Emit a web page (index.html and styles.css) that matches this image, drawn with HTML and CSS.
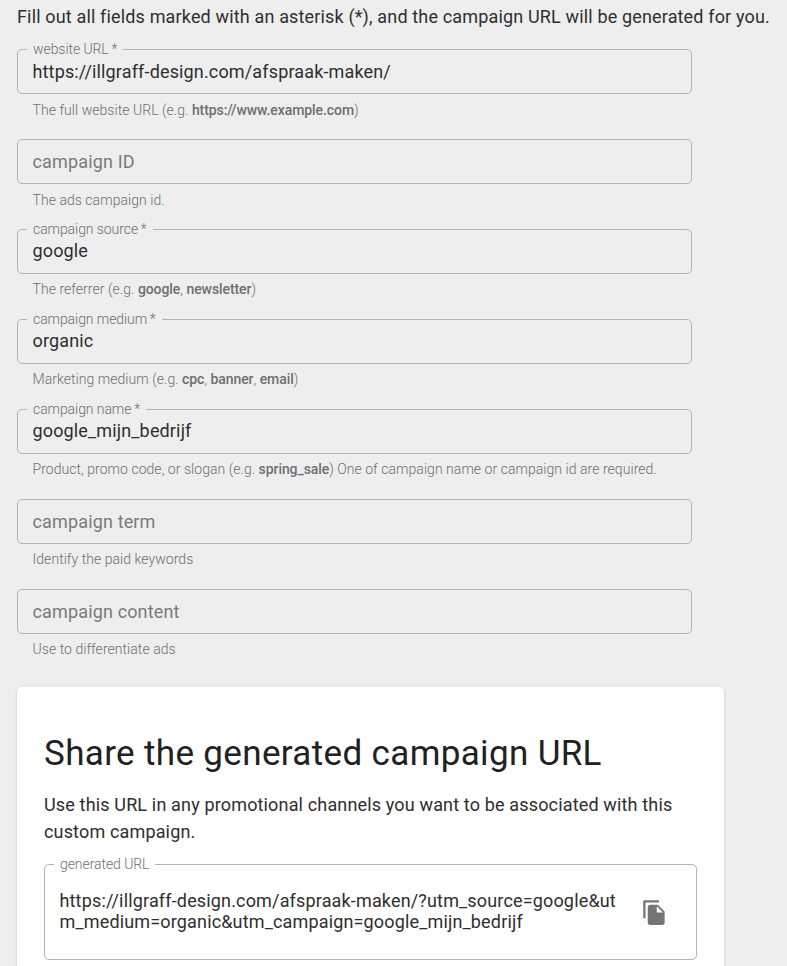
FILE: index.html
```html
<!DOCTYPE html>
<html lang="en">
<head>
    <meta charset="UTF-8">
    <meta name="viewport" content="width=device-width, initial-scale=1.0">
    <title>Campaign URL Builder</title>
    <link rel="stylesheet" href="styles.css">
</head>
<body>
    <p class="intro">Fill out all fields marked with an asterisk (*), and the campaign URL will be generated for you.</p>

    <form class="fields">
        <div class="field">
            <div class="outline">
                <label class="label" for="website">website URL&thinsp;*</label>
                <input class="input" type="text" id="website" value="https://illgraff-design.com/afspraak-maken/">
            </div>
            <p class="helper">The full website URL (e.g. <b>https://www.example.com</b>)</p>
        </div>
        <div class="field">
            <div class="outline">
                <input class="input" type="text" id="campaignId" placeholder="campaign ID">
            </div>
            <p class="helper">The ads campaign id.</p>
        </div>
        <div class="field filled">
            <div class="outline">
                <label class="label" for="source">campaign source&thinsp;*</label>
                <input class="input" type="text" id="source" value="google">
            </div>
            <p class="helper">The referrer (e.g. <b>google</b>, <b>newsletter</b>)</p>
        </div>
        <div class="field filled">
            <div class="outline">
                <label class="label" for="medium">campaign medium&thinsp;*</label>
                <input class="input" type="text" id="medium" value="organic">
            </div>
            <p class="helper">Marketing medium (e.g. <b>cpc</b>, <b>banner</b>, <b>email</b>)</p>
        </div>
        <div class="field filled">
            <div class="outline">
                <label class="label" for="name">campaign name&thinsp;*</label>
                <input class="input" type="text" id="name" value="google_mijn_bedrijf">
            </div>
            <p class="helper">Product, promo code, or slogan (e.g. <b>spring_sale</b>) One of campaign name or campaign id are required.</p>
        </div>
        <div class="field optional">
            <div class="outline">
                <input class="input" type="text" id="term" placeholder="campaign term">
            </div>
            <p class="helper">Identify the paid keywords</p>
        </div>
        <div class="field optional">
            <div class="outline">
                <input class="input" type="text" id="content" placeholder="campaign content">
            </div>
            <p class="helper">Use to differentiate ads</p>
        </div>
    </form>

    <section class="card">
        <h1>Share the generated campaign URL</h1>
        <p class="description">Use this URL in any promotional channels you want to be associated with this custom campaign.</p>
        <div class="outline generated">
            <span class="label">generated URL</span>
            <div class="url">https://illgraff-design.com/afspraak-maken/?utm_source=google&amp;utm_medium=organic&amp;utm_campaign=google_mijn_bedrijf</div>
            <button class="copy" type="button" aria-label="Copy">
                <svg viewBox="0 0 24 24" width="27" height="27">
                    <path fill="currentColor" d="M16 1H3c-.6 0-1 .4-1 1v15h2V3h12V1zm-1 4l6 6v10c0 1.1-.9 2-2 2H8c-1.1 0-2-.9-2-2V7c0-1.1.9-2 2-2h7zm-1 7h5.500L14 6.500V12z"/>
                </svg>
            </button>
        </div>
    </section>
</body>
</html>
```

FILE: styles.css
```css
* {
    box-sizing: border-box;
}
body {
    margin: 0;
    padding: 0 17px;
    height: 966px;
    overflow: hidden;
    background-color: #eeeeee;
    color: #2e2e2e;
    font-family: Roboto, sans-serif;
    font-size: 18px;
}
p, h1 {
    margin: 0;
}
.intro {
    padding-top: 3px;
    height: 49px;
    line-height: 27px;
    letter-spacing: 0.155px;
    white-space: nowrap;
}
.fields {
    width: 675px;
}
.field {
    height: 90px;
}
.outline {
    position: relative;
    height: 45px;
    border: 1px solid #b3b3b3;
    border-radius: 5px;
}
/* sits on top of the border line */
.label {
    position: absolute;
    top: -10px;
    left: 9px;
    padding: 0 6px;
    background-color: #eeeeee;
    color: #6f6f6f;
    font-size: 14px;
    font-weight: 300;
    line-height: 18px;
    letter-spacing: -0.07px;
}
.input {
    display: block;
    width: 100%;
    height: 43px;
    padding: 0 14.5px;
    border: none;
    outline: none;
    background: none;
    color: #2e2e2e;
    font: inherit;
    letter-spacing: 0.15px;
}
.filled .input {
    padding-bottom: 2px;
}
.input::placeholder {
    color: #7a7a7a;
    opacity: 1;
}
.helper {
    padding: 5px 15.5px 0;
    color: #6f6f6f;
    font-size: 14px;
    font-weight: 300;
    line-height: 22px;
    letter-spacing: 0.045px;
    white-space: nowrap;
}
.filled .helper,
.optional .helper {
    padding-top: 4px;
}
.helper b {
    font-weight: 500;
    letter-spacing: -0.08px;
}
.card {
    width: 707px;
    height: 300px;
    margin-top: 8px;
    padding: 45px 27px 0;
    background-color: #ffffff;
    border-radius: 5px;
    box-shadow: 0 1px 3px rgba(0, 0, 0, 0.16);
}
h1 {
    color: #212121;
    font-size: 35px;
    font-weight: 400;
    line-height: 44px;
    letter-spacing: 0.35px;
}
.description {
    margin-top: 15px;
    line-height: 27px;
    letter-spacing: 0.155px;
}
.generated {
    display: flex;
    align-items: center;
    justify-content: space-between;
    width: 653px;
    height: 96px;
    margin-top: 19px;
    padding: 0 28px 0 14.5px;
}
.generated .label {
    background-color: #ffffff;
}
.url {
    width: 560px;
    padding-bottom: 2px;
    line-height: 21px;
    letter-spacing: 0.16px;
    word-break: break-all;
}
.copy {
    display: flex;
    padding: 0;
    border: none;
    background: none;
    color: #757575;
}
```
